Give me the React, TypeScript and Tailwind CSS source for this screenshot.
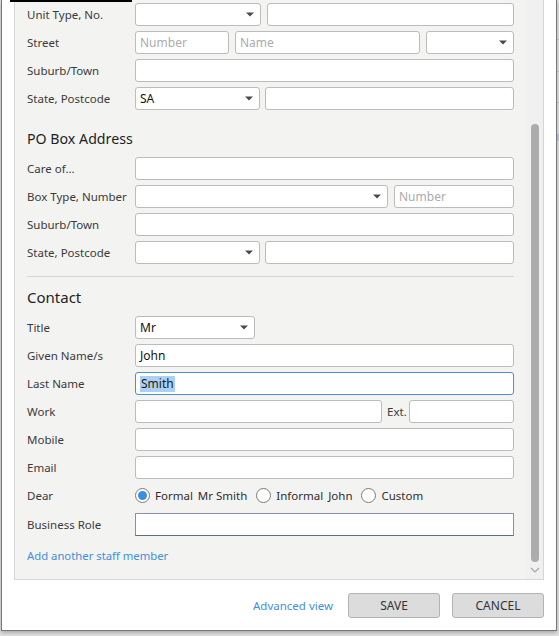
import React from "react";

const Arrow = () => (
  <svg width="8" height="5" viewBox="0 0 8 5" className="shrink-0">
    <path d="M0 0.5 H8 L4 4.5 Z" fill="#4a4a4a" />
  </svg>
);

function Input({ w, children, placeholder, className = "" }: { w?: string; children?: React.ReactNode; placeholder?: string; className?: string }) {
  return (
    <div className={`h-[23px] rounded-[3px] border border-[#bcbcbc] bg-white flex items-center pl-[4px] text-[12px] text-[#111] ${w ?? "flex-1"} ${className}`}>
      {placeholder ? <span className="text-[#ababab]">{placeholder}</span> : children}
    </div>
  );
}

function Select({ w, value }: { w?: string; value?: string }) {
  return (
    <div className={`h-[23px] rounded-[3px] border border-[#bcbcbc] bg-white flex items-center justify-between pl-[4px] pr-[6px] text-[12px] text-[#111] ${w ?? "flex-1"}`}>
      <span>{value ?? ""}</span>
      <Arrow />
    </div>
  );
}

function Row({ label, children, gap = "gap-[5px]" }: { label: string; children: React.ReactNode; gap?: string }) {
  return (
    <div className="flex items-center h-[23px]">
      <div className="w-[108px] shrink-0 text-[#3a3a3a]">{label}</div>
      <div className={`flex flex-1 items-center min-w-0 ${gap}`}>{children}</div>
    </div>
  );
}

function Radio({ checked }: { checked?: boolean }) {
  return (
    <span className="w-[15px] h-[15px] rounded-full border border-[#7b7b7b] bg-white flex items-center justify-center shrink-0">
      {checked && <span className="w-[9px] h-[9px] rounded-full bg-[#3d8de0]" />}
    </span>
  );
}

export default function App() {
  return (
    <div className="w-[559px] h-[636px] bg-[#e3e3e3] relative overflow-hidden font-['Noto_Sans',sans-serif] text-[11.5px]">
      <div className="absolute right-0 top-0 w-[3px] h-full flex flex-col">
        <div className="h-[40px] border-b border-[#c8c8c8]" />
        <div className="h-[32px] border-b border-[#c8c8c8]" />
        <div className="h-[31px] border-b border-[#c8c8c8]" />
        <div className="h-[32px] border-b border-[#c8c8c8]" />
        <div className="h-[6px] bg-[#b9cfe4]" />
      </div>
      <div className="ml-px w-[556px] h-[631px] bg-white border-l border-r border-b border-[#767676] shadow-[0_2px_4px_rgba(0,0,0,0.25)] relative flex flex-col">
        <div className="absolute left-[8px] top-0 w-[122px] h-[2px] bg-black" />
        <div className="ml-[12px] w-[530px] h-[580px] bg-[#f3f3f2] border-l border-r border-b border-[#d6d6d6] flex">
          <div className="flex-1 pl-[12px] pr-[12px] pt-[3px] flex flex-col">
            <div className="flex flex-col gap-[5px]">
              <Row label="Unit Type, No." gap="gap-[6px]">
                <Select w="w-[126px]" />
                <Input />
              </Row>
              <Row label="Street" gap="gap-[6px]">
                <Input w="w-[94px]" placeholder="Number" />
                <Input w="w-[185px]" placeholder="Name" />
                <Select />
              </Row>
              <Row label="Suburb/Town">
                <Input />
              </Row>
              <Row label="State, Postcode">
                <Select w="w-[125px]" value="SA" />
                <Input />
              </Row>
            </div>

            <div className="mt-[19px] mb-[8px] h-[20px] flex items-center text-[14.2px] text-[#1e1e1e]">PO Box Address</div>
            <div className="flex flex-col gap-[5px]">
              <Row label="Care of...">
                <Input />
              </Row>
              <Row label="Box Type, Number" gap="gap-[6px]">
                <Select w="w-[253px]" />
                <Input placeholder="Number" />
              </Row>
              <Row label="Suburb/Town">
                <Input />
              </Row>
              <Row label="State, Postcode">
                <Select w="w-[125px]" />
                <Input />
              </Row>
            </div>

            <div className="mt-[12px] h-px bg-[#d4d4d4]" />

            <div className="mt-[10px] mb-[9px] h-[20px] flex items-center text-[15px] text-[#1e1e1e]">Contact</div>
            <div className="flex flex-col gap-[5px]">
              <Row label="Title">
                <Select w="w-[120px]" value="Mr" />
              </Row>
              <Row label="Given Name/s">
                <Input>John</Input>
              </Row>
              <Row label="Last Name">
                <div className="h-[23px] flex-1 rounded-[3px] border border-[#4a90d9] bg-white flex items-center pl-[4px] text-[12px]">
                  <span className="bg-[#acd0f2] text-[#1a1a1a] px-px leading-[16px]">Smith</span>
                </div>
              </Row>
              <Row label="Work">
                <Input w="w-[247px]" />
                <span className="text-[#3a3a3a] w-[17px]">Ext.</span>
                <Input />
              </Row>
              <Row label="Mobile">
                <Input />
              </Row>
              <Row label="Email">
                <Input />
              </Row>
              <Row label="Dear">
                <div className="flex items-center text-[11.5px] text-[#2e2e2e]">
                  <Radio checked />
                  <span className="ml-[5px]">Formal</span>
                  <span className="ml-[5px]">Mr Smith</span>
                  <span className="ml-[9px]"><Radio /></span>
                  <span className="ml-[5px]">Informal</span>
                  <span className="ml-[5px]">John</span>
                  <span className="ml-[9px]"><Radio /></span>
                  <span className="ml-[5px]">Custom</span>
                </div>
              </Row>
            </div>
            <div className="mt-[6px] flex items-center h-[23px]">
              <div className="w-[108px] shrink-0 text-[#3a3a3a]">Business Role</div>
              <div className="flex-1 h-[23px] border border-[#8593a3] border-b-[#5f6f80] bg-white" />
            </div>
            <div className="mt-[10px] h-[20px] flex items-center text-[11.3px] text-[#3f8fdc]">Add another staff member</div>
          </div>
          <div className="w-[17px] bg-[#f0f0f0] flex flex-col items-center relative">
            <div className="mt-[124px] w-[8px] h-[438px] rounded-full bg-[#acacac]" />
            <svg width="10" height="6" viewBox="0 0 10 6" className="mt-[5px]">
              <path d="M1 1 L5 5 L9 1" stroke="#a5a5a5" strokeWidth="1.2" fill="none" />
            </svg>
          </div>
        </div>
        <div className="mt-[13px] flex items-center justify-end pr-[12px]">
          <span className="text-[11.5px] text-[#3f8fdc] mr-[15px]">Advanced view</span>
          <div className="w-[92px] h-[25px] rounded-[3px] border border-[#b3b3b3] bg-[#dcdcdc] flex items-center justify-center text-[12px] text-[#333]">SAVE</div>
          <div className="ml-[12px] w-[92px] h-[25px] rounded-[3px] border border-[#b3b3b3] bg-[#dcdcdc] flex items-center justify-center text-[12px] text-[#333]">CANCEL</div>
        </div>
      </div>
    </div>
  );
}
